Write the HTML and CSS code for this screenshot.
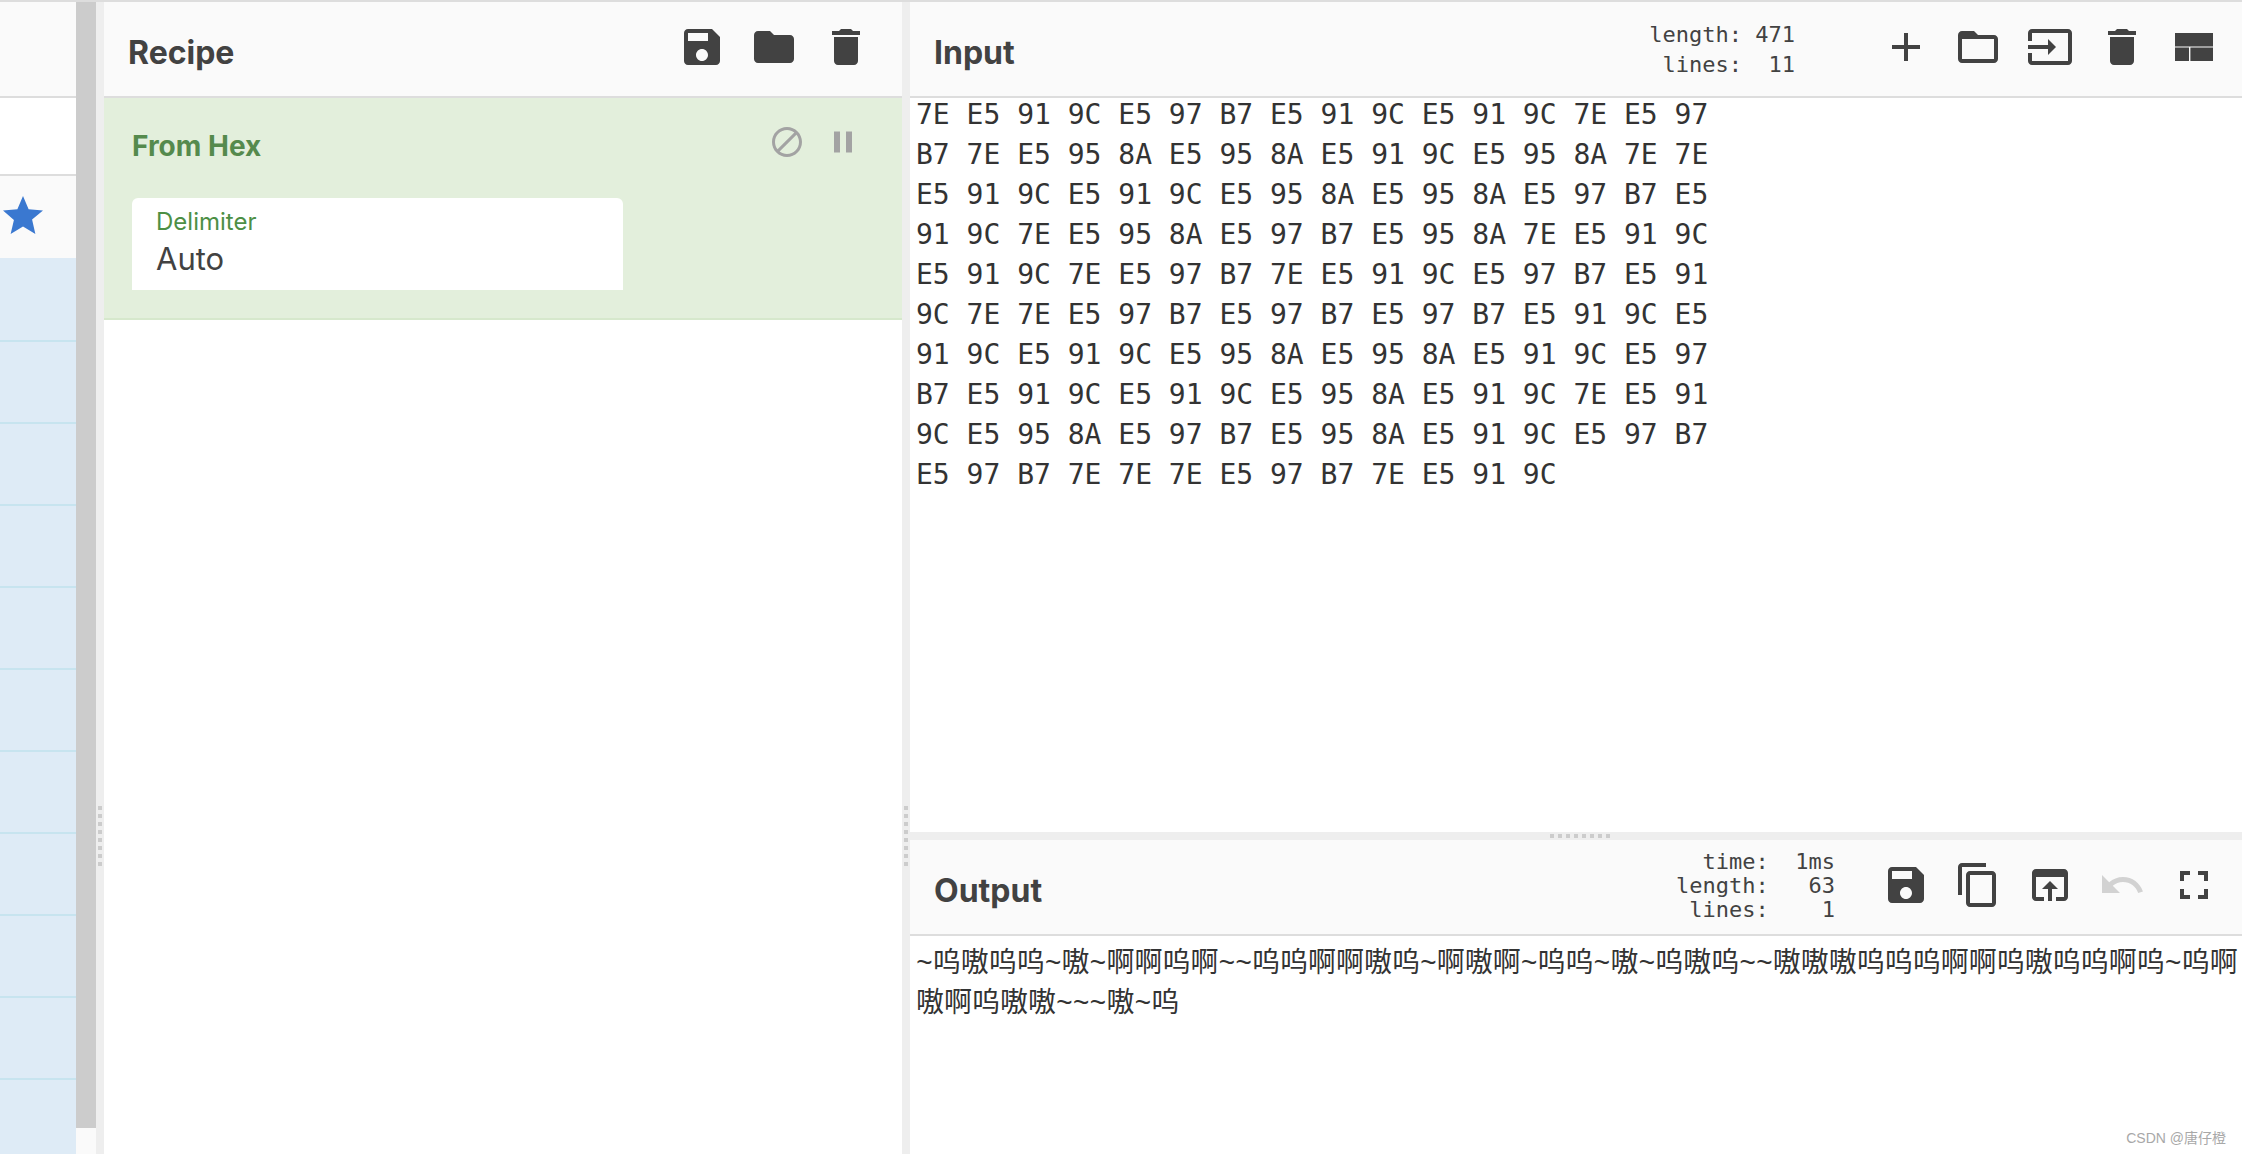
FILE: index.html
```html
<!DOCTYPE html>
<html lang="en">
<head>
<meta charset="utf-8">
<title>CyberChef</title>
<link rel="stylesheet" href="styles.css">
</head>
<body>
<div class="app">
  <aside class="ops">
    <div class="ops-head"></div>
    <div class="ops-search"></div>
    <div class="ops-fav">
      <svg class="star" viewBox="0 0 24 24"><path d="M12 17.27L18.18 21l-1.64-7.19L22 9.24l-7.19-.61L12 2 9.19 8.63 2 9.24l5.46 4.73L5.82 21z"/></svg>
    </div>
    <div class="ops-list">
      <div class="ops-row"></div><div class="ops-row"></div><div class="ops-row"></div><div class="ops-row"></div>
      <div class="ops-row"></div><div class="ops-row"></div><div class="ops-row"></div><div class="ops-row"></div>
      <div class="ops-row"></div><div class="ops-row"></div><div class="ops-row"></div>
    </div>
  </aside>
  <div class="scrollbar"><div class="thumb"></div><div class="track"></div></div>
  <div class="gutter"><span class="grip"></span></div>
  <section class="recipe">
    <header class="head">
      <h2 class="title">Recipe</h2>
      <div class="tools tools-recipe">
        <button class="btn"><svg class="ico" viewBox="0 0 24 24"><path d="M17 3H5c-1.11 0-2 .9-2 2v14c0 1.1.89 2 2 2h14c1.1 0 2-.9 2-2V7l-4-4zm-5 16c-1.66 0-3-1.34-3-3s1.34-3 3-3 3 1.34 3 3-1.34 3-3 3zm3-10H5V5h10v4z"/></svg></button>
        <button class="btn"><svg class="ico" viewBox="0 0 24 24"><path d="M10 4H4c-1.1 0-1.99.9-1.99 2L2 18c0 1.1.9 2 2 2h16c1.1 0 2-.9 2-2V8c0-1.1-.9-2-2-2h-8l-2-2z"/></svg></button>
        <button class="btn"><svg class="ico" viewBox="0 0 24 24"><path d="M6 19c0 1.1.9 2 2 2h8c1.1 0 2-.9 2-2V7H6v12zM19 4h-3.5l-1-1h-5l-1 1H5v2h14V4z"/></svg></button>
      </div>
    </header>
    <div class="operation">
      <div class="op-top">
        <span class="op-name">From Hex</span>
        <div class="op-tools">
          <svg class="op-ico" viewBox="0 0 24 24"><path d="M12 2C6.48 2 2 6.48 2 12s4.48 10 10 10 10-4.48 10-10S17.52 2 12 2zM4 12c0-4.42 3.58-8 8-8 1.85 0 3.55.63 4.9 1.69L5.69 16.9C4.63 15.55 4 13.85 4 12zm8 8c-1.85 0-3.55-.63-4.9-1.69L18.31 7.1C19.37 8.45 20 10.15 20 12c0 4.42-3.58 8-8 8z"/></svg>
          <svg class="op-ico" viewBox="0 0 24 24"><path d="M6 19h4V5H6v14zm8-14v14h4V5h-4z"/></svg>
        </div>
      </div>
      <div class="ingredient">
        <div class="ing-label">Delimiter</div>
        <div class="ing-value">Auto</div>
      </div>
    </div>
  </section>
  <div class="gutter"><span class="grip"></span></div>
  <main class="io">
    <section class="input">
      <header class="head">
        <h2 class="title">Input</h2>
        <pre class="stats stats-in">length: 471
 lines:  11</pre>
        <div class="tools">
          <button class="btn"><svg class="ico" viewBox="0 0 24 24"><path d="M19 13h-6v6h-2v-6H5v-2h6V5h2v6h6v2z"/></svg></button>
          <button class="btn"><svg class="ico" viewBox="0 0 24 24"><path d="M20 6h-8l-2-2H4c-1.1 0-1.99.9-1.99 2L2 18c0 1.1.9 2 2 2h16c1.1 0 2-.9 2-2V8c0-1.1-.9-2-2-2zm0 12H4V8h16v10z"/></svg></button>
          <button class="btn"><svg class="ico" viewBox="0 0 24 24"><path d="M21 3.01H3c-1.1 0-2 .9-2 2V9h2V4.99h18v14.03H3V15H1v4.01c0 1.1.9 1.98 2 1.98h18c1.1 0 2-.88 2-1.98v-14c0-1.11-.9-2-2-2zM11 16l4-4-4-4v3H1v2h10v3z"/></svg></button>
          <button class="btn"><svg class="ico" viewBox="0 0 24 24"><path d="M6 19c0 1.1.9 2 2 2h8c1.1 0 2-.9 2-2V7H6v12zM19 4h-3.5l-1-1h-5l-1 1H5v2h14V4z"/></svg></button>
          <button class="btn"><svg class="ico" viewBox="0 0 24 24"><path d="M2.5 5h19v6.7h-19zM2.5 12.3h7v6.7h-7zM10.2 12.3h11.3v6.7H10.2z"/></svg></button>
        </div>
      </header>
      <pre class="text text-in">7E E5 91 9C E5 97 B7 E5 91 9C E5 91 9C 7E E5 97
B7 7E E5 95 8A E5 95 8A E5 91 9C E5 95 8A 7E 7E
E5 91 9C E5 91 9C E5 95 8A E5 95 8A E5 97 B7 E5
91 9C 7E E5 95 8A E5 97 B7 E5 95 8A 7E E5 91 9C
E5 91 9C 7E E5 97 B7 7E E5 91 9C E5 97 B7 E5 91
9C 7E 7E E5 97 B7 E5 97 B7 E5 97 B7 E5 91 9C E5
91 9C E5 91 9C E5 95 8A E5 95 8A E5 91 9C E5 97
B7 E5 91 9C E5 91 9C E5 95 8A E5 91 9C 7E E5 91
9C E5 95 8A E5 97 B7 E5 95 8A E5 91 9C E5 97 B7
E5 97 B7 7E 7E 7E E5 97 B7 7E E5 91 9C</pre>
    </section>
    <div class="divider"><span class="grip-h"></span></div>
    <section class="output">
      <header class="head">
        <h2 class="title">Output</h2>
        <pre class="stats stats-out">  time:  1ms
length:   63
 lines:    1</pre>
        <div class="tools">
          <button class="btn"><svg class="ico" viewBox="0 0 24 24"><path d="M17 3H5c-1.11 0-2 .9-2 2v14c0 1.1.89 2 2 2h14c1.1 0 2-.9 2-2V7l-4-4zm-5 16c-1.66 0-3-1.34-3-3s1.34-3 3-3 3 1.34 3 3-1.34 3-3 3zm3-10H5V5h10v4z"/></svg></button>
          <button class="btn"><svg class="ico" viewBox="0 0 24 24"><path d="M16 1H4c-1.1 0-2 .9-2 2v14h2V3h12V1zm3 4H8c-1.1 0-2 .9-2 2v14c0 1.1.9 2 2 2h11c1.1 0 2-.9 2-2V7c0-1.1-.9-2-2-2zm0 16H8V7h11v14z"/></svg></button>
          <button class="btn"><svg class="ico" viewBox="0 0 24 24"><path d="M19 4H5c-1.11 0-2 .9-2 2v12c0 1.1.89 2 2 2h4v-2H5V8h14v10h-4v2h4c1.1 0 2-.9 2-2V6c0-1.1-.89-2-2-2zm-7 6l-4 4h3v6h2v-6h3l-4-4z"/></svg></button>
          <button class="btn"><svg class="ico ico-off" viewBox="0 0 24 24"><path d="M12.5 8c-2.65 0-5.05.99-6.9 2.6L2 7v9h9l-3.62-3.62c1.39-1.16 3.16-1.88 5.12-1.88 3.54 0 6.55 2.31 7.6 5.5l2.37-.78C21.08 11.03 17.15 8 12.5 8z"/></svg></button>
          <button class="btn"><svg class="ico" viewBox="0 0 24 24"><path d="M7 14H5v5h5v-2H7v-3zm-2-4h2V7h3V5H5v5zm12 7h-3v2h5v-5h-2v3zM14 5v2h3v3h2V5h-5z"/></svg></button>
        </div>
      </header>
      <div class="text text-out">~呜嗷呜呜~嗷~啊啊呜啊~~呜呜啊啊嗷呜~啊嗷啊~呜呜~嗷~呜嗷呜~~嗷嗷嗷呜呜呜啊啊呜嗷呜呜啊呜~呜啊嗷啊呜嗷嗷~~~嗷~呜</div>
    </section>
  </main>
</div>
<div class="watermark">CSDN @唐仔橙</div>
</body>
</html>
```

FILE: styles.css
```css
* { box-sizing: border-box; }
html, body { margin: 0; height: 1154px; overflow: hidden; background: #fff; }
body { font-family: Roboto, "Noto Sans CJK SC", sans-serif; color: #424242; position: relative; }

.app { display: flex; height: 1154px; border-top: 2px solid #ddd; overflow: hidden; }

/* operations column, cut off at the left */
.ops { width: 76px; flex: none; display: flex; flex-direction: column; overflow: hidden; }
.ops-head { height: 96px; flex: none; background: #fafafa; border-bottom: 2px solid #ddd; }
.ops-search { height: 78px; flex: none; background: #fff; border-bottom: 2px solid #ddd; }
.ops-fav { height: 82px; flex: none; background: #fafafa; display: flex; align-items: center; padding-bottom: 2px; }
.star { width: 48px; height: 48px; margin-left: -1px; fill: #3a78d0; flex: none; }
.ops-list { flex: 1; min-height: 0; overflow: hidden; background: #deebf6; }
.ops-row { height: 82px; border-top: 2px solid #c7e4ef; }
.ops-row:first-child { border-top-color: transparent; }

.scrollbar { width: 20px; flex: none; display: flex; flex-direction: column; }
.thumb { flex: 1; background: #ccc; }
.track { height: 26px; background: #fafafa; }

.gutter { width: 8px; flex: none; background: #eee; position: relative; }
.grip { position: absolute; left: 2px; top: 804px; width: 4px; height: 60px;
  background: repeating-linear-gradient(to bottom, #ccc 0 4px, transparent 4px 8px); }

.head { height: 96px; flex: none; background: #fafafa; border-bottom: 2px solid #ddd;
  display: flex; align-items: flex-start; }
.title { margin: 30px 0 0 24px; font: 700 32px/42px Inter, Roboto, sans-serif; color: #424242; }
.tools { margin-left: auto; display: flex; padding-top: 21px; padding-right: 12px; }
.tools-recipe { padding-right: 20px; }
.btn { width: 72px; height: 48px; padding: 0 12px; border: 0; background: none; display: block; }
.ico { width: 48px; height: 48px; display: block; fill: #424242; }
.ico-off { fill: #d2d2d2; }

.recipe { width: 798px; flex: none; background: #fff; display: flex; flex-direction: column; }
.operation { height: 222px; background: #e3efdc; border-bottom: 2px solid #d6e8cc; padding: 0 28px; }
.op-top { display: flex; height: 100px; align-items: flex-start; }
.op-name { margin-top: 30px; font: 700 28px/36px Inter, Roboto, sans-serif; color: #558a4d; }
.op-tools { margin-left: auto; display: flex; gap: 20px; margin-top: 26px; margin-right: 13px; }
.op-ico { width: 36px; height: 36px; fill: #a3a3a3; }
.ingredient { height: 92px; background: #fff; border-radius: 6px 6px 0 0; padding: 8px 24px 0; width: 491px; }
.ing-label { font: 400 24px/32px Inter, Roboto, sans-serif; color: #4d8f45; }
.ing-value { font: 400 31px/41px Inter, Roboto, sans-serif; color: #424242; }

.io { flex: 1; min-width: 0; display: flex; flex-direction: column; }
.input { height: 830px; flex: none; overflow: hidden; display: flex; flex-direction: column; }
.divider { height: 8px; flex: none; background: #eee; position: relative; }
.grip-h { position: absolute; left: 640px; top: 2px; width: 60px; height: 4px;
  background: repeating-linear-gradient(to right, #ccc 0 4px, transparent 4px 8px); }
.output { flex: 1; min-height: 0; display: flex; flex-direction: column; }

.stats { margin: 0; font: 22px/30px "DejaVu Sans Mono", monospace; color: #424242; }
.stats-in { margin: 18px 0 0 auto; }
.stats-out { margin: 10px 0 0 auto; line-height: 24px; }
.stats + .tools { margin-left: 0; }
.stats-in { margin-right: 75px; }
.stats-out { margin-right: 35px; }

.text { margin: 0; padding: 0 0 0 6px; font: 28px/40px "DejaVu Sans Mono", "Noto Sans CJK SC", monospace; color: #333; }
.text-in { margin-top: -3px; }
.text-out { padding-top: 9px; word-break: break-all; font-family: "Liberation Mono", "Noto Sans CJK SC", monospace; }

.watermark { position: absolute; right: 16px; bottom: 6px;
  font: 14px/20px "Liberation Sans", "Noto Sans CJK SC", sans-serif; color: #a8a8a8; }
```
